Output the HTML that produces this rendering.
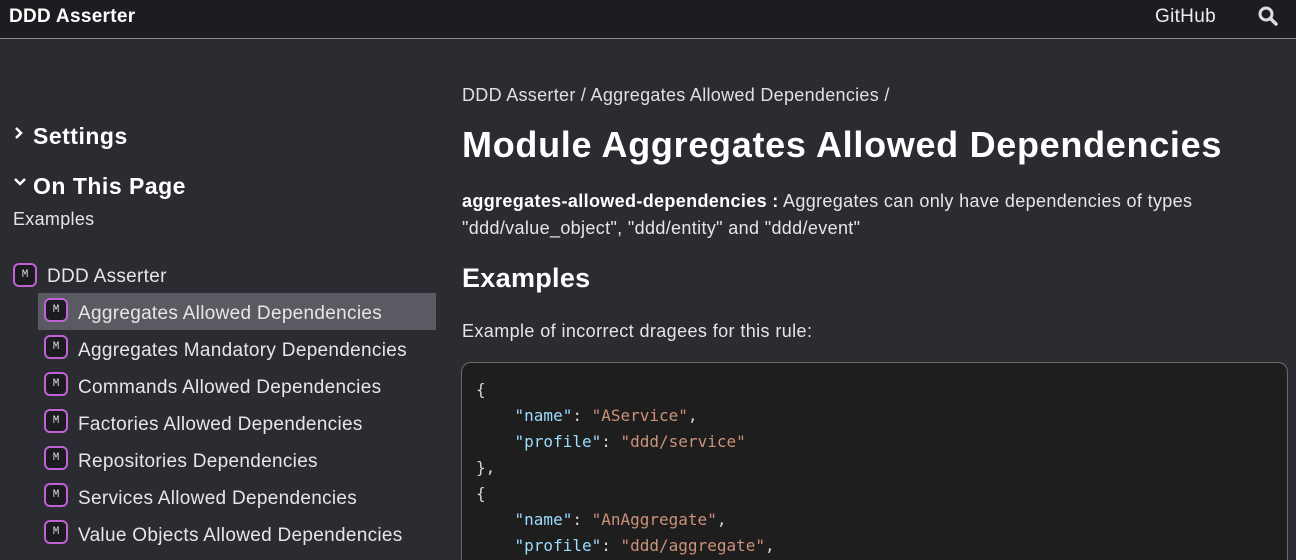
<!DOCTYPE html>
<html><head><meta charset="utf-8"><style>
*{margin:0;padding:0;box-sizing:border-box}
html,body{width:1296px;height:560px;overflow:hidden}
body{background:#2a2c31;color:#e6e6e6;font-family:"Liberation Sans",sans-serif;position:relative}
.hdr{position:absolute;left:0;top:0;width:1296px;height:39px;background:#1c1d21;border-bottom:1px solid #8a8a8a}
.abs{position:absolute;white-space:nowrap}
.m{display:inline-block;width:24px;height:24px;border:2px solid #c061d6;border-radius:6px;background:#1c1b20;color:#ddd;font:11px "Liberation Mono",monospace;text-align:center;line-height:20px;vertical-align:middle}
.it{position:absolute;left:38px;width:398px;height:37px;font-size:19px;line-height:37px;padding-left:6px;color:#e6e6e6;letter-spacing:0.3px}
.it .m{margin-right:10px;margin-top:-3px;letter-spacing:0}
.it span.t{position:relative;top:2px}
pre{position:absolute;left:461px;top:362px;width:827px;height:220px;background:#1e1e1f;border:1px solid #6a6a6a;border-radius:10px;padding:14px 14px;font:16px/26px "DejaVu Sans Mono","Liberation Mono",monospace;color:#d6d6d6}
.k{color:#9cdcfe}.s{color:#ce9178}
</style></head><body>
<div class="hdr"></div>
<div class="abs" style="left:9px;top:6px;font-size:19px;font-weight:bold;color:#fff;letter-spacing:0.3px">DDD Asserter</div>
<div class="abs" style="left:1155px;top:6px;font-size:19px;color:#eee;letter-spacing:0.3px">GitHub</div>
<svg class="abs" style="left:1257px;top:5px" width="22" height="22" viewBox="0 0 22 22"><circle cx="9" cy="9" r="6" fill="none" stroke="#ddd" stroke-width="3"/><path d="M13.5 13.5L19 19" stroke="#ddd" stroke-width="3.5" stroke-linecap="round"/></svg>

<svg class="abs" style="left:14px;top:126px" width="10" height="14"><path d="M2 2L7 7L2 12" stroke="#fff" stroke-width="2.5" fill="none"/></svg>
<div class="abs" style="left:33px;top:123px;font-size:23px;font-weight:bold;color:#fff;letter-spacing:0.5px">Settings</div>
<svg class="abs" style="left:14px;top:177px" width="12" height="10"><path d="M1 2L6 7L11 2" stroke="#fff" stroke-width="2.5" fill="none"/></svg>
<div class="abs" style="left:33px;top:173px;font-size:23px;font-weight:bold;color:#fff;letter-spacing:0.5px">On This Page</div>
<div class="abs" style="left:13px;top:209px;font-size:18px;color:#e6e6e6;letter-spacing:0.3px">Examples</div>
<div class="abs" style="left:13px;top:264px;font-size:19px;line-height:26px;letter-spacing:0.3px"><span class="m" style="margin-right:10px;margin-top:-3px;letter-spacing:0">M</span>DDD Asserter</div>
<div class="it" style="top:293px;background:#5a5b62"><span class="m">M</span><span class="t">Aggregates Allowed Dependencies</span></div>
<div class="it" style="top:330px"><span class="m">M</span><span class="t">Aggregates Mandatory Dependencies</span></div>
<div class="it" style="top:367px"><span class="m">M</span><span class="t">Commands Allowed Dependencies</span></div>
<div class="it" style="top:404px"><span class="m">M</span><span class="t">Factories Allowed Dependencies</span></div>
<div class="it" style="top:441px"><span class="m">M</span><span class="t">Repositories Dependencies</span></div>
<div class="it" style="top:478px"><span class="m">M</span><span class="t">Services Allowed Dependencies</span></div>
<div class="it" style="top:515px"><span class="m">M</span><span class="t">Value Objects Allowed Dependencies</span></div>

<div class="abs" style="left:462px;top:85px;font-size:18px;color:#e0e0e0;letter-spacing:0.3px">DDD Asserter / Aggregates Allowed Dependencies /</div>
<div class="abs" style="left:462px;top:124px;font-size:36px;font-weight:bold;color:#fff;letter-spacing:0.7px">Module Aggregates Allowed Dependencies</div>
<div class="abs" style="left:462px;top:188px;font-size:18px;line-height:27px;color:#e6e6e6;white-space:normal;width:800px;letter-spacing:0.35px"><b style="color:#fff">aggregates-allowed-dependencies :</b> Aggregates can only have dependencies of types "ddd/value_object", "ddd/entity" and "ddd/event"</div>
<div class="abs" style="left:462px;top:263px;font-size:27px;font-weight:bold;color:#fff;letter-spacing:0.3px">Examples</div>
<div class="abs" style="left:462px;top:321px;font-size:18px;color:#e6e6e6;letter-spacing:0.4px">Example of incorrect dragees for this rule:</div>
<pre>{
    <span class="k">"name"</span>: <span class="s">"AService"</span>,
    <span class="k">"profile"</span>: <span class="s">"ddd/service"</span>
},
{
    <span class="k">"name"</span>: <span class="s">"AnAggregate"</span>,
    <span class="k">"profile"</span>: <span class="s">"ddd/aggregate"</span>,</pre>
</body></html>
